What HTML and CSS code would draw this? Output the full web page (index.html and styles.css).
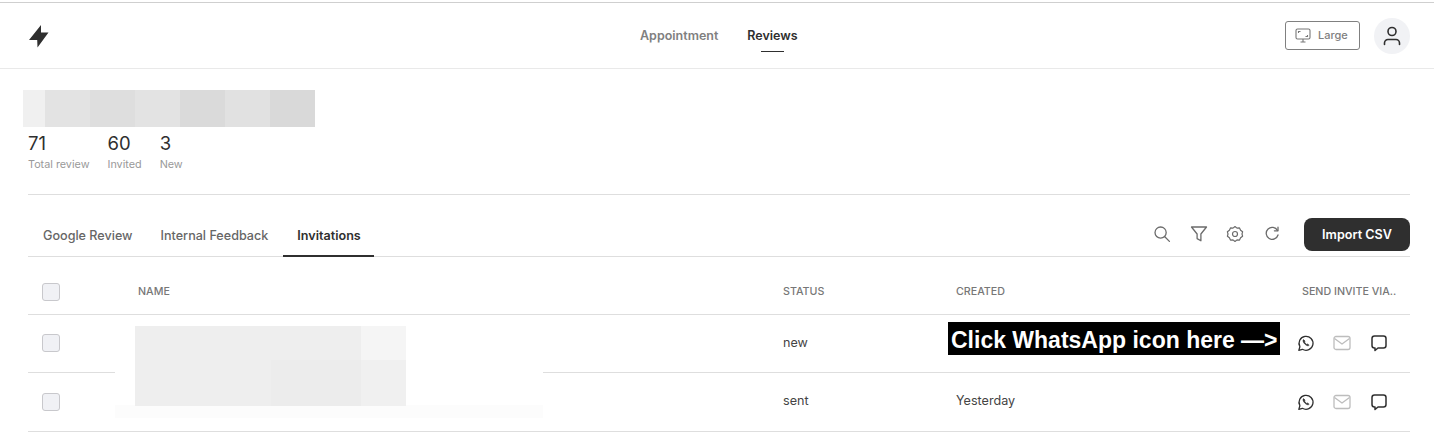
FILE: index.html
```html
<!DOCTYPE html>
<html lang="en">
<head>
  <meta charset="UTF-8" />
  <meta name="viewport" content="width=device-width, initial-scale=1.0"/>
  <title>Reviews</title>
  <link rel="stylesheet" href="styles.css">
</head>
<body>
  <header class="topbar">
    <svg class="logo" width="22" height="24" viewBox="0 0 22 24"><path d="M13 1 L13 8.500 L20.500 8.500 L9.500 23.500 L9.200 16 L1 16 Z" fill="#2f2f2f"/></svg>
    <nav class="topnav">
      <a class="topnav-link">Appointment</a>
      <a class="topnav-link active">Reviews</a>
    </nav>
    <div class="topbar-right">
      <button class="size-btn">
        <svg width="16" height="15" viewBox="0 0 16 15" fill="none" stroke="#777" stroke-width="1.100"><rect x="1" y="1" width="14" height="10" rx="1.500"/><path d="M5.500 14h5M8 11v3M3.500 5V3.500H5.500M12.500 7v1.500H10.500"/></svg>
        <span class="size-label">Large</span>
      </button>
      <div class="avatar">
        <svg width="18" height="20" viewBox="0 0 18 20" fill="none" stroke="#2f2f2f" stroke-width="1.600" stroke-linecap="round"><circle cx="9" cy="5.500" r="4"/><path d="M1.500 18.500v-1.500a3.500 3.500 0 0 1 3.500-3.500h8a3.500 3.500 0 0 1 3.500 3.500v1.500"/></svg>
      </div>
    </div>
  </header>

  <section class="summary">
    <div class="stat">
      <div class="stat-num">71</div>
      <div class="stat-label">Total review</div>
    </div>
    <div class="stat">
      <div class="stat-num">60</div>
      <div class="stat-label">Invited</div>
    </div>
    <div class="stat">
      <div class="stat-num">3</div>
      <div class="stat-label">New</div>
    </div>
  </section>

  <main class="content">
    <div class="tabbar">
      <div class="tabs">
        <a class="tab">Google Review</a>
        <a class="tab">Internal Feedback</a>
        <a class="tab active">Invitations</a>
      </div>
      <div class="tools">
        <svg class="tool" width="18" height="18" viewBox="0 0 18 18" fill="none" stroke="#6b6b6b" stroke-width="1.300" stroke-linecap="round"><circle cx="7.600" cy="7.600" r="5.600"/><path d="M11.800 11.800l4.600 4.600"/></svg>
        <svg class="tool" width="18" height="18" viewBox="0 0 18 18" fill="none" stroke="#6b6b6b" stroke-width="1.300" stroke-linejoin="round"><path d="M1.500 2h15l-5.600 7v6.800l-3.800-2.200V9z"/></svg>
        <svg class="tool" width="18" height="18" viewBox="0 0 18 18" fill="none" stroke="#6b6b6b" stroke-width="1.200" stroke-linejoin="round"><path d="M9 1.500l2 1.600 2.500-.2 1.100 2.300 2 1.600-.6 2.200.6 2.200-2 1.600-1.100 2.300-2.500-.2-2 1.600-2-1.600-2.500.2-1.100-2.300-2-1.600.6-2.200-.6-2.200 2-1.600 1.100-2.300 2.500.2z"/><circle cx="9" cy="9" r="2.500"/></svg>
        <svg class="tool" width="18" height="18" viewBox="0 0 18 18" fill="none" stroke="#6b6b6b" stroke-width="1.300" stroke-linecap="round" stroke-linejoin="round"><path d="M14.500 5.500A6 6 0 1 0 15 10"/><path d="M15 2.200v3.600h-3.600"/></svg>
        <button class="import-btn">Import CSV</button>
      </div>
    </div>

    <div class="row head">
      <div><span class="check"></span></div>
      <div>NAME</div>
      <div>STATUS</div>
      <div>CREATED</div>
      <div class="send-head">SEND INVITE VIA..</div>
    </div>

    <div class="row first">
      <div><span class="check"></span></div>
      <div></div>
      <div class="cell">new</div>
      <div></div>
      <div class="send">
        <svg width="18" height="18" viewBox="0 0 18 18" fill="none" stroke="#2f2f2f" stroke-width="1.300" stroke-linejoin="round"><path d="M1.800 16.400l1.100-3.700a7 7 0 1 1 2.500 2.600z"/><path d="M6.500 5.500c-.9 1 -.6 2.600 1.200 4.500s3.500 2.200 4.500 1.300l-1.500-1.400-1 .5c-1-.5-1.700-1.300-2.200-2.300l.6-1z" fill="#2f2f2f" stroke-width=".5"/></svg>
        <svg width="18" height="18" viewBox="0 0 18 18" fill="none" stroke="#bdbdbd" stroke-width="1.300" stroke-linejoin="round"><rect x="1" y="2.500" width="16" height="13" rx="2"/><path d="M1.500 4.500l7.500 5.500 7.500-5.500"/></svg>
        <svg width="18" height="18" viewBox="0 0 18 18" fill="none" stroke="#2f2f2f" stroke-width="1.500" stroke-linejoin="round"><path d="M4.500 2h9a2.500 2.500 0 0 1 2.500 2.500v7a2.500 2.500 0 0 1-2.500 2.500H8l-3 2.500V14h-.5A2.500 2.500 0 0 1 2 11.500v-7A2.500 2.500 0 0 1 4.500 2z"/></svg>
      </div>
    </div>

    <div class="row last">
      <div><span class="check"></span></div>
      <div></div>
      <div class="cell">sent</div>
      <div class="cell">Yesterday</div>
      <div class="send">
        <svg width="18" height="18" viewBox="0 0 18 18" fill="none" stroke="#2f2f2f" stroke-width="1.300" stroke-linejoin="round"><path d="M1.800 16.400l1.100-3.700a7 7 0 1 1 2.500 2.600z"/><path d="M6.500 5.500c-.9 1 -.6 2.600 1.200 4.500s3.500 2.200 4.500 1.300l-1.500-1.400-1 .5c-1-.5-1.700-1.300-2.200-2.300l.6-1z" fill="#2f2f2f" stroke-width=".5"/></svg>
        <svg width="18" height="18" viewBox="0 0 18 18" fill="none" stroke="#bdbdbd" stroke-width="1.300" stroke-linejoin="round"><rect x="1" y="2.500" width="16" height="13" rx="2"/><path d="M1.500 4.500l7.500 5.500 7.500-5.500"/></svg>
        <svg width="18" height="18" viewBox="0 0 18 18" fill="none" stroke="#2f2f2f" stroke-width="1.500" stroke-linejoin="round"><path d="M4.500 2h9a2.500 2.500 0 0 1 2.500 2.500v7a2.500 2.500 0 0 1-2.500 2.500H8l-3 2.500V14h-.5A2.500 2.500 0 0 1 2 11.500v-7A2.500 2.500 0 0 1 4.500 2z"/></svg>
      </div>
    </div>
  </main>

  <!-- redactions and the annotation sit on top of the page -->
  <div class="blur-title">
    <i class="b1"></i><i class="b2"></i><i class="b3"></i><i class="b4"></i><i class="b5"></i><i class="b6"></i><i class="b7"></i>
  </div>
  <div class="blur-name-wrap"></div>
  <div class="blur-name-low"></div>
  <div class="blur-name">
    <i class="n1"></i><i class="n1"></i><i class="n1"></i><i class="n1"></i><i class="n1"></i><i class="n2"></i>
    <i class="n1"></i><i class="n1"></i><i class="n1"></i><i class="n3"></i><i class="n3"></i><i class="n4"></i>
  </div>
  <div class="callout">Click WhatsApp icon here —&gt;</div>
</body>
</html>
```

FILE: styles.css
```css
* {
  box-sizing: border-box;
}

html, body {
  height: 443px;
  overflow: hidden;
}

body {
  margin: 0;
  font-family: 'Inter', sans-serif;
  color: #2f2f2f;
  background: #fff;
  position: relative;
}

.topbar {
  height: 67px;
  margin-top: 2px;
  border-top: 1px solid #cfcfcf;
  border-bottom: 1px solid #e9e9e9;
  padding: 0 24px 0 28px;
  display: flex;
  align-items: center;
  position: relative;
}

.logo {
  display: block;
}

.topnav {
  position: absolute;
  left: 640px;
  top: 0;
  height: 65px;
  display: flex;
  gap: 29px;
  align-items: center;
}

.topnav-link {
  font-size: 12.500px;
  font-weight: 600;
  color: #808080;
  position: relative;
}

.topnav-link.active {
  color: #2f2f2f;
}

.topnav-link.active::after {
  content: "";
  position: absolute;
  left: 14px;
  right: 14px;
  bottom: -9px;
  height: 1px;
  background: #2f2f2f;
}

.topbar-right {
  margin-left: auto;
  display: flex;
  align-items: center;
  gap: 14px;
}

.size-btn {
  width: 75px;
  height: 29px;
  border: 1px solid #808080;
  border-radius: 3px;
  background: #fff;
  font-family: inherit;
  font-size: 11px;
  font-weight: 500;
  color: #808080;
  display: flex;
  align-items: center;
  gap: 7px;
  padding: 0 0 0 9px;
}

.size-label {
  padding-bottom: 2px;
}

.avatar {
  width: 36px;
  height: 36px;
  border-radius: 50%;
  background: #f1f2f5;
  display: flex;
  align-items: center;
  justify-content: center;
}

.summary {
  margin: 0 24px 0 28px;
  height: 126px;
  padding-top: 63px;
  border-bottom: 1px solid #dedede;
  display: flex;
  gap: 18px;
}

.stat-num {
  font-size: 18.500px;
  line-height: 23px;
}

.stat-label {
  font-size: 10.800px;
  line-height: 14px;
  margin-top: 3px;
  color: #999;
}

.content {
  margin: 0 24px 0 28px;
}

.tabbar {
  height: 62px;
  border-bottom: 1px solid #dedede;
  display: flex;
  justify-content: space-between;
  align-items: flex-end;
}

.tabs {
  display: flex;
  margin-left: 1px;
}

.tab {
  font-size: 12.600px;
  font-weight: 500;
  color: #666;
  line-height: 16px;
  padding: 0 14px 11px;
  margin-bottom: -1px;
  border-bottom: 2px solid transparent;
}

.tab.active {
  color: #2f2f2f;
  font-weight: 600;
  margin-left: 1px;
  padding-right: 13px;
  border-bottom-color: #2f2f2f;
}

.tools {
  display: flex;
  align-items: center;
  height: 34px;
  margin-bottom: 5px;
}

.tool {
  margin-right: 18.500px;
}

.import-btn {
  width: 106px;
  height: 33px;
  margin-left: 5px;
  border: none;
  border-radius: 8px;
  background: #2f2f2f;
  color: #fff;
  font-family: inherit;
  font-size: 12.600px;
  font-weight: 600;
}

.row {
  display: grid;
  grid-template-columns: 110px 645px 173px 340px 114px;
  align-items: center;
  height: 58px;
  border-bottom: 1px solid #dedede;
  font-size: 12.600px;
  color: #444;
}

.row.first {
  padding-bottom: 1px;
}

.row.first .cell {
  padding-bottom: 2px;
}

.row.last {
  height: 59px;
}

.row.head {
  height: 58px;
  padding-top: 12px;
  font-size: 10.700px;
  font-weight: 500;
  color: #777;
}

.row > div:first-child {
  padding-left: 14px;
  display: flex;
}

.check {
  width: 18px;
  height: 18px;
  border: 1px solid #c8c8cc;
  border-radius: 3px;
  background: #f0f1f5;
}

.cell {
  padding-bottom: 3px;
}

.send-head {
  padding-left: 6px;
  white-space: nowrap;
}

.send {
  display: flex;
  gap: 18.500px;
  padding-left: .5px;
}

.blur-title {
  position: absolute;
  left: 23px;
  top: 90px;
  width: 292px;
  height: 37px;
  display: grid;
  grid-template-columns: 22px repeat(6, 1fr);
}

.b1 { background: #f0f0f0; }
.b2 { background: #e3e3e3; }
.b3 { background: #dedede; }
.b4 { background: #e3e3e3; }
.b5 { background: #dadada; }
.b6 { background: #e1e1e1; }
.b7 { background: #d9d9d9; }

.blur-name-wrap {
  position: absolute;
  left: 115px;
  top: 326px;
  width: 428px;
  height: 80px;
  background: #fff;
}

.blur-name-low {
  position: absolute;
  left: 115px;
  top: 405px;
  width: 428px;
  height: 13px;
  background: #fcfcfc;
}

.blur-name {
  position: absolute;
  left: 135px;
  top: 326px;
  width: 271px;
  height: 80px;
  display: grid;
  grid-template-columns: repeat(6, 1fr);
  grid-template-rows: 34px 1fr;
}

.n1 { background: #eeeeee; }
.n2 { background: #f5f5f5; }
.n3 { background: #ececec; }
.n4 { background: #f0f0f0; }

.callout {
  position: absolute;
  left: 948px;
  top: 322px;
  width: 332px;
  height: 33px;
  background: #000;
  color: #fff;
  font-family: 'Liberation Sans', sans-serif;
  font-size: 23px;
  font-weight: 700;
  line-height: 36px;
  padding-left: 3px;
  white-space: nowrap;
}
```
